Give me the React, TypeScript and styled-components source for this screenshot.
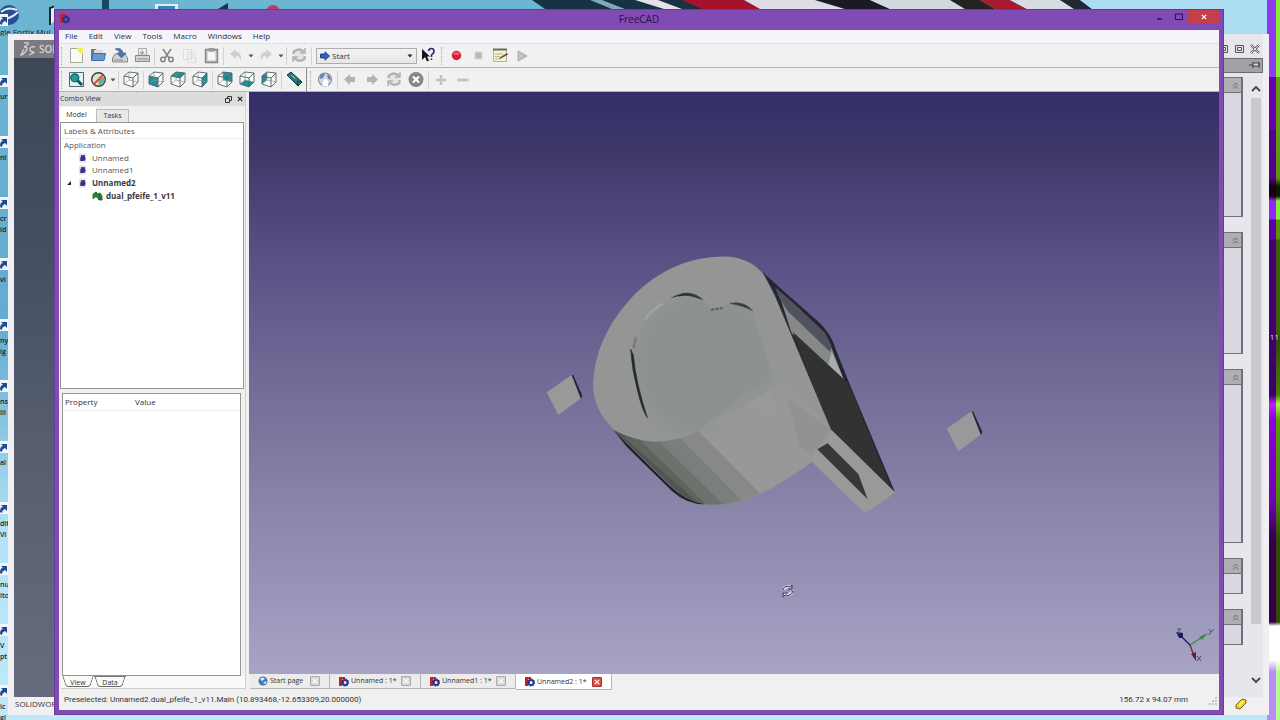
import React from "react";
import styled, { createGlobalStyle, css } from "styled-components";

const GlobalStyle = createGlobalStyle`
  *, *::before, *::after { box-sizing: border-box; }
  body { margin: 0; font-family: "Open Sans", "Noto Sans", sans-serif; font-size: 8px; line-height: 12px; color: #333; }
  button, select { font: inherit; color: inherit; border: 0; background: none; padding: 0; margin: 0; }
  ul { list-style: none; margin: 0; padding: 0; }
  svg { display: block; flex: none; }
`;

/* ---------- desktop ---------- */

const Desktop = styled.div`
  position: relative;
  display: flex;
  min-height: 100vh;
  padding: 9px 56px 5px 54px;
  overflow: hidden;
  background: linear-gradient(#6cb6d2, #63abd0 45%, #b4e3f7 75%, #bfe9fb);
`;

const TopArt = styled.svg`
  position: absolute;
  top: 0;
  left: 0;
  width: 100%;
  height: 40px;
`;

const RightArt = styled.div`
  position: absolute;
  top: 0;
  right: 0;
  bottom: 0;
  width: 13px;
  display: flex;
`;

const PurpleBand = styled.div`
  flex: 1;
  background: linear-gradient(#8f3af0 0 77px, #6a00a8 77px 130px, #540088 130px 178px, #150018 186px 196px, #9326ff 201px 219px, #5c00a0 220px 239px, #420070 240px 330px, #3a0068 395px, #c21cff 404px, #8a00d8 420px, #7400b8 500px, #300048 540px 622px, #fff 626px 660px, #b98cf8 672px);
`;

const GreenBand = styled(PurpleBand)`
  flex: 0 0 4px;
  background: linear-gradient(#88ee38 0 77px, #629c10 77px 130px, #5c9410 178px, #101800 186px 196px, #86ee38 201px 219px, #5a9400 220px 239px, #3e6000 240px 330px, #34480c 340px, #4c7c00 395px, #a0ff48 404px, #5c9c00 420px, #50880c 500px, #344800 540px 622px, #fff 626px 660px, #b4ff90 672px);
`;

const ShortcutColumn = styled.ul`
  position: absolute;
  top: 14px;
  left: 0;
  width: 8px;
  overflow: hidden;
`;

const Shortcut = styled.li`
  display: flex;
  flex-direction: column;
  align-items: flex-start;
  gap: 4px;
  height: 61px;
  color: #082236;
  font-size: 7px;
  font-weight: 600;
  line-height: 11px;
  white-space: pre-line;
`;

const TopShortcuts = styled.div`
  position: absolute;
  top: 0;
  left: 0;
  width: 54px;
  height: 36px;
  overflow: hidden;
  display: flex;
  flex-direction: column;
  justify-content: space-between;
  color: #082236;
  font-size: 8px;
  line-height: 9px;
  white-space: nowrap;
`;

const DesktopLabel = styled.span`
  position: absolute;
  right: 1px;
  top: 331px;
  z-index: 1;
  color: #ddd;
  font-size: 8px;
`;

/* ---------- window behind ---------- */

const BackWindow = styled.div`
  position: absolute;
  inset: 34px 11px 5px 8px;
  display: flex;
  flex-direction: column;
  padding: 6px 6px 0;
  background: #f0f0f3;
`;

const BackBody = styled.div`
  flex: 1;
  display: flex;
  justify-content: space-between;
  background: linear-gradient(#3c4756, #434e62 30%, #555d6e 60%, #666c7d);
`;

const BackBrand = styled.div`
  display: flex;
  align-items: center;
  gap: 3px;
  width: 120px;
  height: 18px;
  padding-left: 6px;
  background: #7d7b7f;
  color: #d2d2d4;
  font-size: 10px;
  font-weight: 600;
`;

const BackSide = styled.div`
  display: flex;
  flex-direction: column;
  width: 80px;
  margin-top: -6px;
  background: #e6e6ec;
`;

const BackControls = styled.div`
  display: flex;
  align-items: flex-end;
  justify-content: flex-end;
  gap: 6px;
  height: 24px;
  padding: 0 3px 4px;
`;

const PinBar = styled.div`
  display: flex;
  justify-content: flex-end;
  height: 15px;
  padding: 1px 1px 0;
  border: 1px solid #6b6b70;
  background: #a2a2a6;
`;

const SideScroll = styled.div`
  flex: 1;
  display: flex;
  padding-top: 4px;
`;

const Cards = styled.div`
  flex: 1;
  display: flex;
  flex-direction: column;
  gap: 15px;
`;

const Card = styled.div<{ $h: number }>`
  height: ${(p) => p.$h}px;
  border: 1px solid #707078;
  border-right-width: 2px;
  background: #d8d8e0;
`;

const CardHead = styled.div`
  display: flex;
  justify-content: flex-end;
  align-items: center;
  height: 15px;
  padding-right: 1px;
  border-bottom: 1px solid #707078;
  background: #aeaeb3;
`;

const ScrollTrack = styled.div`
  display: flex;
  flex-direction: column;
  align-items: center;
  width: 11px;
  margin: 0 2px 0 7px;
  padding: 8px 0 13px;
  gap: 6px;
`;

const ScrollThumb = styled.div`
  flex: 1;
  width: 10px;
  margin-bottom: 47px;
  background: #c9cbcb;
`;

const BackStatus = styled.div`
  display: flex;
  align-items: center;
  justify-content: space-between;
  height: 18px;
  padding: 0 16px 4px 1px;
  color: #333;
`;

/* ---------- main window ---------- */

const Window = styled.main`
  position: relative;
  flex: 1;
  min-width: 0;
  display: flex;
  flex-direction: column;
  padding: 0 5px 5px;
  background: #804bb3;
  box-shadow: inset 0 0 0 1px #693a9c;
`;

const TitleBar = styled.header`
  display: grid;
  grid-template-columns: 1fr auto 1fr;
  align-items: center;
  height: 21px;
  padding-bottom: 2px;
  color: #2b1244;
  font-size: 10px;
`;

const WindowButtons = styled.div`
  display: flex;
  justify-content: flex-end;
  align-self: start;
  padding-top: 1px;
`;

const WindowButton = styled.button<{ $close?: boolean }>`
  display: flex;
  align-items: center;
  justify-content: center;
  width: ${(p) => (p.$close ? 31 : 19)}px;
  height: 13px;
  background: ${(p) => (p.$close ? "#c53e4c" : "none")};
`;

const MenuBar = styled.nav`
  display: flex;
  align-items: flex-start;
  gap: 11px;
  height: 14px;
  padding: 0 6px;
  background: #f5f4fb;
  border-bottom: 1px solid #dedee2;
`;

const MenuItem = styled.button`
  color: #2d2d35;
`;

const ToolRow = styled.div`
  display: flex;
  align-items: center;
  height: 24px;
  background: #f1f1f1;
  border-bottom: 1px solid #b2b2b4;
`;

const Grip = styled.span`
  width: 2px;
  height: 18px;
  margin: 0 2px;
  border-left: 1px dotted #aaa;
`;

const Separator = styled.span<{ $dark?: boolean }>`
  width: 1px;
  height: ${(p) => (p.$dark ? 24 : 18)}px;
  margin: 0 1px;
  background: ${(p) => (p.$dark ? "#8c8c8c" : "#d2d2d2")};
`;

const ToolButton = styled.button<{ $narrow?: boolean }>`
  display: flex;
  align-items: center;
  justify-content: center;
  width: ${(p) => (p.$narrow ? 8 : 22)}px;
  height: 22px;
`;

const Workbench = styled.label`
  display: flex;
  align-items: center;
  width: 101px;
  height: 16px;
  margin-left: 3px;
  padding: 0 3px;
  border: 1px solid #adadad;
  background: linear-gradient(#f3f3f3, #e6e6e6);
`;

const WorkbenchSelect = styled.select`
  flex: 1;
  appearance: none;
  padding-left: 2px;
  outline: 0;
`;

const Workspace = styled.div`
  flex: 1;
  display: flex;
  min-height: 0;
  background: #f0f0f0;
`;

const Dock = styled.aside`
  display: flex;
  flex-direction: column;
  width: 187px;
  margin-right: 3px;
  border-right: 1px solid #d2d2d2;
`;

const DockTitle = styled.div`
  display: flex;
  align-items: center;
  height: 14px;
  padding: 0 0 0 1px;
  background: #dcdcdc;
  font-size: 7px;
`;

const DockName = styled.span`
  flex: 1;
`;

const DockButton = styled.button`
  display: flex;
  justify-content: center;
  width: 11px;
`;

const TabRow = styled.div`
  display: flex;
  align-items: flex-end;
  height: 16px;
  padding-left: 1px;
  font-size: 7px;
`;

const DockTab = styled.button<{ $active?: boolean }>`
  width: ${(p) => (p.$active ? 36 : 33)}px;
  height: ${(p) => (p.$active ? 15 : 13)}px;
  padding-right: ${(p) => (p.$active ? 3 : 0)}px;
  background: ${(p) => (p.$active ? "#fff" : "#e8e8e8")};
  border: ${(p) => (p.$active ? "0" : "1px solid #bcbcbc")};
  border-bottom: 0;
`;

const panelBorder = css`
  border: 1px solid #959595;
  background: #fff;
`;

const Tree = styled.section`
  ${panelBorder}
  flex: 0 1 267px;
  margin: 0 1px 4px 1px;
`;

const TreeHead = styled.div`
  height: 16px;
  padding: 2px 3px 0;
  border-bottom: 1px solid #ececec;
  color: #555;
`;

const TreeRows = styled.ul`
  display: grid;
  grid-template-rows: repeat(5, 1fr);
  height: 63px;
  color: #555;
`;

const TreeRow = styled.li<{ $indent: number; $bold?: boolean }>`
  display: flex;
  align-items: center;
  padding-left: ${(p) => p.$indent}px;
  font-weight: ${(p) => (p.$bold ? 700 : 400)};
  color: ${(p) => (p.$bold ? "#3c3744" : "inherit")};
`;

const TreeIcon = styled.span`
  width: 14px;
`;

const Properties = styled.section`
  ${panelBorder}
  flex: 1;
  margin: 0 4px 0 3px;
`;

const PropertyTable = styled.table`
  width: 100%;
  border-collapse: collapse;
  th {
    height: 16px;
    padding: 1px 2px 0;
    border-bottom: 1px solid #eee;
    font-weight: 400;
    text-align: left;
  }
  th:first-child { width: 70px; }
`;

const BottomTabs = styled.div`
  display: flex;
  height: 13px;
  margin: 0 0 1px 2px;
  padding-left: 1px;
  background: #fafafa;
  border-bottom: 1px solid #ccc;
`;

const BottomTab = styled.button<{ $active?: boolean }>`
  position: relative;
  width: 32px;
  height: 12px;
  font-size: 7px;
  line-height: 11px;
  border-top: 1px solid ${(p) => (p.$active ? "#fafafa" : "#777")};
  &::before, &::after {
    content: "";
    position: absolute;
    top: -1px;
    bottom: 1px;
    width: 50%;
    border-bottom: 1px solid #666;
  }
  &::before {
    left: 2px;
    border-left: 1px solid #666;
    border-radius: 0 0 0 3px;
    transform: skewX(18deg);
  }
  &::after {
    right: 2px;
    border-right: 1px solid #666;
    border-radius: 0 0 3px 0;
    transform: skewX(-18deg);
  }
`;

const Main = styled.div`
  flex: 1;
  min-width: 0;
  display: flex;
  flex-direction: column;
`;

const Viewport = styled.div`
  position: relative;
  flex: 1;
  min-height: 0;
  background: linear-gradient(#332e6a, #3e3868 10%, #564d82 26%, #6c6693 45%, #8883a8 70%, #a7a4c6);
`;

const Scene = styled.svg`
  position: absolute;
  inset: 0;
  width: 100%;
  height: 100%;
`;

const AxisCross = styled.svg`
  position: absolute;
  right: 4px;
  bottom: 10px;
`;

const DocTabs = styled.div`
  display: flex;
  height: 16px;
  padding-left: 1px;
`;

const DocTab = styled.div<{ $active?: boolean; $w: number }>`
  display: flex;
  align-items: center;
  justify-content: space-between;
  width: ${(p) => p.$w}px;
  height: ${(p) => (p.$active ? 16 : 15)}px;
  padding: 0 9px 0 8px;
  background: ${(p) => (p.$active ? "#fff" : "#ececec")};
  border: solid #b5b5b5;
  border-width: 0 1px 1px 0;
`;

const DocName = styled.button`
  display: flex;
  align-items: center;
  gap: 2px;
  font-size: 7px;
`;

const CloseTab = styled.button<{ $active?: boolean }>`
  display: flex;
  align-items: center;
  justify-content: center;
  width: 10px;
  height: 10px;
  border: 1px solid ${(p) => (p.$active ? "#a82c28" : "#a8a8a8")};
  border-radius: 1px;
  background: ${(p) => (p.$active ? "#df5048" : "#d8d8d8")};
`;

const StatusBar = styled.footer`
  display: flex;
  align-items: center;
  justify-content: space-between;
  height: 20px;
  padding: 0 2px 0 5px;
  background: #f0f0f0;
  font-family: Roboto, "Open Sans", sans-serif;
`;

const StatusSize = styled.span`
  margin-left: auto;
  margin-right: 20px;
`;

/* ---------- icons ---------- */

type Face = "none" | "front" | "top" | "right" | "rear" | "bottom" | "left";

const facePoints: Record<Face, string> = {
  none: "",
  front: "1,5 10,7 10,16 1,13",
  top: "1,5 6,1 15,2 10,7",
  right: "10,7 15,2 15,11 10,16",
  rear: "6,1 15,2 15,11 6,9",
  bottom: "1,13 6,9 15,11 10,16",
  left: "1,5 6,1 6,9 1,13",
};

const Cube = ({ face }: { face: Face }) => (
  <svg width="17" height="17" viewBox="0 0 17 17" fill="none">
    <path d="M1 5 6 1 15 2 10 7ZM10 7 15 2V11L10 16ZM1 5 10 7V16L1 13Z" fill="#fafafa" />
    {face !== "none" && <polygon points={facePoints[face]} fill="#1f9297" />}
    <path d="M6 1V9L1 13M6 9 15 11" stroke="#8a9899" strokeWidth=".7" />
    <path d="M1 5 6 1 15 2 10 7ZM10 7 15 2V11L10 16ZM1 5V13L10 16" stroke="#4e6265" strokeWidth=".9" strokeLinejoin="round" />
  </svg>
);

const Logo = ({ size = 11 }: { size?: number }) => (
  <svg width={size} height={size} viewBox="0 0 11 11">
    <path d="M1 1H7V3H4V5H6V7H4V10H1Z" fill="#c8202c" />
    <circle cx="7" cy="6.5" r="2.6" fill="none" stroke="#26348c" strokeWidth="2" />
    <circle cx="7" cy="6.5" r="3.7" fill="none" stroke="#26348c" strokeWidth="1" strokeDasharray="1.4 1.5" />
  </svg>
);

const Caret = ({ color = "#555" }: { color?: string }) => (
  <svg width="6" height="4" viewBox="0 0 6 4"><path d="M0.5 .5H5.5L3 3.5Z" fill={color} /></svg>
);

const icons: Record<string, React.ReactNode> = {
  new: <><path d="M2.500 1.500H14.500V15.500H2.500Z" fill="#fbfbf4" stroke="#a6a69e" /><path d="M9 1H15V7Q10 6 9 1Z" fill="#eded5a" /></>,
  open: <><path d="M1 14V3Q1 2 2 2H6L7 4H13V7H4Z" fill="#717780" /><path d="M4 3H13V7H4Z" fill="#d8dade" /><path d="M3 6.500H15.500L14 13.500H1.500Z" fill="#6c98d0" stroke="#3e6ba8" /></>,
  save: <><path d="M3 7H13L15.500 11V15H.5V11Z" fill="#cfd1d2" stroke="#85888a" /><path d="M2 13H11" stroke="#85888a" /><path d="M3 2Q10 0 11 6H14L9.500 11 5 6H8Q7 3 3 2Z" fill="#4876b0" stroke="#2f588e" strokeWidth=".6" /></>,
  print: <><path d="M4.500 1.500H12.500V8H4.500Z" fill="#eee" stroke="#a8a8a8" /><path d="M8 3V7M6 5 8 7 10 5" stroke="#888" fill="none" /><path d="M1.500 8.500H15.500V14.500H1.500Z" fill="#d4d4d4" stroke="#888" /><path d="M3 12H14" stroke="#8a8a8a" /></>,
  cut: <g fill="none" stroke="#808080"><path d="M4 2 10 11M12 2 6 11" strokeWidth="1.500" /><circle cx="4" cy="12.500" r="2.200" strokeWidth="1.500" /><circle cx="12" cy="12.500" r="2.200" strokeWidth="1.500" /></g>,
  copy: <g fill="#f2f2f2" stroke="#dcdcdc"><path d="M2.500 2.500H10.500V12.500H2.500ZM6.500 5.500H14.500V15.500H6.500Z" /><path d="M8 8H13M8 10H13M8 12H11" /></g>,
  paste: <><path d="M2.500 2.500H14.500V15.500H2.500Z" fill="#bdbdbd" stroke="#888" strokeWidth="1.400" /><path d="M4.500 4.500H12.500V13.500H4.500Z" fill="#f6f6f6" /><path d="M5.500 1H11.500V4.500H5.500Z" fill="#999" /></>,
  undo: <path d="M2 7 8 2V5Q14 5 13 14 12 9 8 9V12Z" fill="#cfcfcf" />,
  redo: <path d="M14 7 8 2V5Q1 5 3 14 4 9 8 9V12Z" fill="#cfcfcf" />,
  refresh: <><path d="M2.500 2.500H13.500V14.500H2.500Z" fill="#e4e4e4" /><g fill="none" stroke="#b0b0b0" strokeWidth="2.200"><path d="M2.500 7V5Q8 0 13 5M13.500 9V12Q8 16 3 11" /><path d="M14 1V6H9M2 15V10H7" strokeWidth="1.500" /></g></>,
  help: <><path d="M2 2V13L5 10 7 14.500 9 13.500 7 9.500H10Z" fill="#151515" /><path d="M8.500 4Q9 1.500 11.500 1.500T14 4.500Q14 6 11.500 8V10M11.500 11.500V13" fill="none" stroke="#24246c" strokeWidth="1.600" /></>,
  record: <><circle cx="8.500" cy="8.500" r="4.700" fill="#da1f35" /><ellipse cx="8.500" cy="6.500" rx="3" ry="1.600" fill="#ee6070" /></>,
  stop: <path d="M5 5H12V12H5Z" fill="#b9b9b9" stroke="#d8d8d8" />,
  edit: <><path d="M1.500 2.500H14.500V14.500H1.500Z" fill="#f3f1d8" stroke="#b4b296" /><path d="M1 1.500H15V3.500H1Z" fill="#6f6c56" /><path d="M3 7H11M3 9.500H8M3 12H7" stroke="#bcb890" /><path d="M7 11 15 6 16 7.500 8 12Z" fill="#6b4a2a" /></>,
  play: <path d="M4 4 13 9 4 14Z" fill="#c2c2c2" stroke="#acacac" />,
  fit: <><path d="M1.500 1.500H15.500V15.500H1.500Z" fill="#e5f1f2" stroke="#3c7074" /><path d="M9 9 14 14" stroke="#17585f" strokeWidth="3" /><circle cx="6.800" cy="6.800" r="4" fill="#24989c" stroke="#176268" strokeWidth="1.200" /></>,
  nodraw: <><circle cx="8.500" cy="8.500" r="6.800" fill="#cdebd0" /><path d="M8 9 14 6V11L9 15Z" fill="#58b5a0" /><circle cx="8.500" cy="8.500" r="6.800" fill="none" stroke="#4b3b36" strokeWidth="1.400" /><path d="M13 4 4 13" stroke="#e04c36" strokeWidth="2" /></>,
  measure: <><path d="M1 4 5 1 16 11 12 15Z" fill="#23777a" stroke="#163c40" /><path d="M5 4.500Q8 5 9 8" fill="none" stroke="#79bcba" strokeWidth="1.200" /><path d="M12 14 11 11 15 10" fill="none" stroke="#163c40" /></>,
  globe: <><circle cx="8" cy="8.500" r="6.500" fill="#cbd8ec" stroke="#8490ab" strokeWidth="1.200" /><path d="M3 4Q6 1 8 3L6 7 3 8ZM10 3 13 5 14 9 11 8ZM5 10 8 9 9 14 6 13Z" fill="#7187b3" /><path d="M5.500 15V10L8 7.500 11 10V15Z" fill="#fff" /></>,
  back: <path d="M2 8.500 8 3V6H13V11H8V14Z" fill="#b2b2b2" />,
  forward: <path d="M14 8.500 8 3V6H3V11H8V14Z" fill="#b2b2b2" />,
  cancel: <><circle cx="8" cy="8.500" r="7.500" fill="#868686" /><path d="M5 5.500 11 11.500M11 5.500 5 11.500" stroke="#fff" strokeWidth="2.200" /></>,
  plus: <path d="M8 4V14M3 9H13" stroke="#c2c2c2" strokeWidth="2.500" />,
  minus: <path d="M2.500 9H13.500" stroke="#c2c2c2" strokeWidth="2.800" />,
};

const Tool = ({ name, label }: { name: string; label: string }) => (
  <ToolButton aria-label={label}>
    <svg width="17" height="17" viewBox="0 0 17 17">{icons[name]}</svg>
  </ToolButton>
);

const Drop = ({ label }: { label: string }) => (
  <ToolButton $narrow aria-label={label}><Caret /></ToolButton>
);

const View = ({ face, label }: { face: Face; label: string }) => (
  <ToolButton aria-label={label}><Cube face={face} /></ToolButton>
);

const DocIcon = () => (
  <svg width="9" height="10" viewBox="0 0 9 10">
    <path d="M1 .5H8V9.500H1Z" fill="#e2e2f4" /><path d="M3 2H7V4H5V8H2Z" fill="#80406c" /><circle cx="5" cy="5.500" r="2.500" fill="#33338e" />
  </svg>
);

const MeshIcon = () => (
  <svg width="11" height="10" viewBox="0 0 11 10">
    <path d="M1 8V3L4 1 6 3 8 2 10 5V9L7 9 5 6 3 6Z" fill="#2f9a3d" stroke="#145f26" strokeWidth=".8" /><path d="M4 1V6M8 2 7 9M6 3 10 9" stroke="#0f4d1d" strokeWidth=".7" />
  </svg>
);

const Chevrons = () => (
  <svg width="9" height="9" viewBox="0 0 9 9" fill="none" stroke="#66666b"><path d="M2 4.500 4.500 2 7 4.500M2 7.500 4.500 5 7 7.500" /></svg>
);

const ShortcutArrow = () => (
  <svg width="8" height="12" viewBox="0 0 8 12"><path d="M0 0H8V12H0Z" fill="#f2f6fa" /><path d="M0 10Q0 5 3 5L1 3H7V9L5 7Q2 8 2 11Z" fill="#1c4a94" /></svg>
);

const XMark = ({ color, size = 6 }: { color: string; size?: number }) => (
  <svg width={size} height={size} viewBox="0 0 6 6"><path d="M.8 .8 5.200 5.200M5.200 .8 .8 5.200" stroke={color} strokeWidth="1.200" /></svg>
);

const SizeGrip = () => (
  <svg width="9" height="9" viewBox="0 0 9 9"><path d="M7 1H9V3H7ZM7 4H9V6H7ZM4 4H6V6H4ZM7 7H9V9H7ZM4 7H6V9H4ZM1 7H3V9H1Z" fill="#c4c4c4" /></svg>
);

/* ---------- 3D scene ---------- */

const Block = ({ x, y }: { x: number; y: number }) => (
  <g transform={`translate(${x} ${y})`}>
    <path d="M0 52 75 0 103 70 35 120Z" fill="#979a98" />
    <path d="M75 0 80 1 107 62 103 72Z" fill="#252434" />
  </g>
);

const Whistle = () => (
  <Scene viewBox="249 92 970 582" aria-label="dual_pfeife_1_v11">
    <defs>
      <linearGradient id="skirt" gradientUnits="userSpaceOnUse" x1="590" y1="700" x2="760" y2="600">
        <stop offset="0" stopColor="#8b8e8c" /><stop offset=".5" stopColor="#959796" /><stop offset="1" stopColor="#989a99" />
      </linearGradient>
      <linearGradient id="skirtFade" gradientUnits="userSpaceOnUse" x1="640" y1="400" x2="690" y2="580">
        <stop offset="0" stopColor="#989a99" stopOpacity="0" /><stop offset="1" stopColor="#979998" />
      </linearGradient>
      <radialGradient id="disc" gradientUnits="userSpaceOnUse" cx="530" cy="370" r="260">
        <stop offset="0" stopColor="#8b8f8e" /><stop offset=".75" stopColor="#8d9190" /><stop offset="1" stopColor="#8f9291" stopOpacity="0" />
      </radialGradient>
    </defs>
    <g transform="translate(530 240) scale(.33333)">
      <path d="M700 98 780 170 870 250Q905 285 918 330L958 430 1095 757 900 575 735 165Z" fill="#252532" />
      <path d="M750 172 905 325 945 428 785 280Z" fill="#868988" />
      <path d="M905 335 945 428 893 378Z" fill="#a9acac" />
      <path d="M735 142 790 188 885 278 905 318 900 335 775 215 748 175Z" fill="#50525c" />
      <path d="M788 275 955 430 1088 752 902 572Z" fill="#313232" />
      <path d="M250 570 370 598 520 565 690 420 760 430 905 570 1095 757 1065 780 1005 820 845 665C800 700 730 745 690 762 640 788 600 797 545 795 490 790 450 765 420 735Z" fill="url(#skirt)" />
      <path d="M250 570 330 598 530 792Q470 785 425 740Z" fill="#525651" />
      <path d="M280 590 345 602 532 793 505 788Z" fill="#5f645f" />
      <path d="M330 600 395 600 582 793 530 794Z" fill="#6d726e" />
      <path d="M382 600 450 588 637 782 580 793Z" fill="#7b7f7c" />
      <path d="M445 588 505 572 690 760 635 782Z" fill="#868987" />
      <path d="M250 570Q330 650 420 738 470 785 525 793 470 793 425 752L290 620Z" fill="#202226" />
      <path d="M600 50C645 55 680 75 702 105 722 135 735 165 750 200L905 570 845 640 800 620 720 450 520 568C470 590 430 605 370 605 320 600 285 590 250 568 200 520 185 460 190 420 195 340 230 260 290 190 370 95 480 45 600 50Z" fill="#939694" />
      <path d="M345 240C375 195 430 158 470 160 500 162 530 180 545 210 570 195 640 175 665 212L740 440 510 572Q430 605 350 590L350 530Q320 450 305 330 325 270 345 240Z" fill="url(#disc)" />
      <path d="M505 572 720 400 790 440 905 570 845 665 720 745 690 760Z" fill="url(#skirtFade)" />
      <path d="M770 470 905 570 845 645 810 622Z" fill="#919392" />
      <path d="M345 238Q370 205 400 190" stroke="#a0a3a1" strokeWidth="8" fill="none" />
      <path d="M420 175Q450 157 475 158 504 162 520 181 490 167 465 167 440 167 420 175Z" fill="#353633" />
      <path d="M543 209 580 204" stroke="#5b5e59" strokeWidth="6" strokeDasharray="9 4" />
      <path d="M600 190Q642 182 668 212 640 197 600 190Z" fill="#353733" stroke="#454843" strokeWidth="2" />
      <path d="M317 290 311 325" stroke="#7b7e78" strokeWidth="8" />
      <path d="M302 328 310 345Q318 430 352 533 338 515 322 450 306 390 302 328Z" fill="#282b28" stroke="#282b28" strokeWidth="2" />
      <path d="M862 628 893 610 985 702 1013 778Z" fill="#373836" />
      <path d="M700 98 735 165 905 570" fill="none" stroke="#34343c" strokeWidth="3" />
      <Block x={50} y={405} />
      <Block x={1250} y={514} />
    </g>
    <g fill="none" stroke="#dcdce8" strokeWidth="3"><path d="M784 590Q784 586 791 587M792 592Q790 596 784 594" /></g>
    <g fill="none" stroke="#3c3a60" strokeWidth="1"><path d="M783 590Q784 585 790 587L792 585V589H788M793 591Q791 597 785 595L783 597V593H788" /></g>
  </Scene>
);

const Axes = () => (
  <AxisCross width="40" height="38" viewBox="0 0 40 38">
    <path d="M15 19 29 10" stroke="#3c8a4a" strokeWidth="1.400" /><path d="M24 11 33 7 27 14Z" fill="#3c8a4a" />
    <path d="M15 19 5 9" stroke="#262660" strokeWidth="1.500" /><path d="M1 6 8 7 8 12 4 12Z" fill="#1c1c5c" />
    <path d="M15 19 19 30" stroke="#7c2848" strokeWidth="1.500" /><path d="M16 28 21 26 21 35Z" fill="#6c1c40" />
    <path d="M2 3H6L2 7H6M34 3 36 6 39 3M36 6 34 9M22 30 26 35M26 30 22 35" fill="none" stroke="#4d4970" />
  </AxisCross>
);

/* ---------- page ---------- */

const shortcutLabels = ["", "ur", "nl", "cr\nid", "vi", "ny\nig", "ns\nlli", "al", "dit\nVi", "nu\nito", "V\npt", "ic\ngi"];
const cardHeights = [140, 122, 174, 36, 36];

export default function App() {
  return (
    <Desktop>
      <GlobalStyle />
      <TopArt viewBox="0 0 1280 40" preserveAspectRatio="none">
        <path d="M102 0H109V40H102Z" fill="#16485e" />
        <path d="M155 4H178V12H155Z" fill="#e2edf4" /><path d="M158 6H175V10H158Z" fill="#3c83bd" />
        <path d="M218 9 228 3V9Z" fill="#173449" /><circle cx="273" cy="12" r="7" fill="#bd3d68" />
        <path d="M532 0H760L790 9H545Z" fill="#163245" />
        <path d="M590 0H602L625 9H612Z" fill="#7da9bd" /><path d="M635 0H658L682 9H664Z" fill="#e4e1e9" />
        <path d="M682 0H744L760 9H702Z" fill="#a5122e" /><path d="M744 0H815L845 9H760Z" fill="#dedde5" />
        <path d="M815 0H870L890 9H845Z" fill="#191a25" /><path d="M870 0H950L965 9H890Z" fill="#d5d7df" />
        <path d="M950 0H980L995 9H965Z" fill="#222" /><path d="M980 0H1010L1027 9H995Z" fill="#a61b32" />
        <path d="M1010 0H1060L1074 9H1027Z" fill="#d8dbe2" /><path d="M1060 0H1080L1092 9H1074Z" fill="#202833" />
        <path d="M1080 0H1280V40H1224V9H1092Z" fill="#acdcf2" />
      </TopArt>
      <RightArt><PurpleBand /><GreenBand /></RightArt>
      <DesktopLabel>11</DesktopLabel>
      <TopShortcuts>
        <svg width="70" height="25" viewBox="0 0 70 25">
          <circle cx="9" cy="15" r="10" fill="#284f93" /><path d="M1 12Q8 6 17 10M4 19Q12 18 18 12" stroke="#dfe9f5" strokeWidth="2" fill="none" />
          <path d="M50 25V8L61 4 70 8" fill="#e8edf2" stroke="#152a3b" strokeWidth="2" />
        </svg>
        <span>gle Fortix Mul</span>
      </TopShortcuts>
      <ShortcutColumn>
        {shortcutLabels.map((label, i) => (
          <Shortcut key={i}><ShortcutArrow />{label}</Shortcut>
        ))}
      </ShortcutColumn>

      <BackWindow>
        <BackBody>
          <BackBrand>
            <svg width="16" height="15" viewBox="0 0 16 15" fill="none" stroke="#d2d2d4" strokeWidth="1.300">
              <path d="M4 1Q9 0 8 2T4 5Q9 5 6 9T1 13L4 7M15 5Q10 4 10 7T13 10 9 13" />
            </svg>
            SOLIDWORKS
          </BackBrand>
          <BackSide>
            <BackControls>
              <svg width="42" height="10" viewBox="0 0 42 10" fill="none" stroke="#55555c">
                <path d="M1.500 1.500H9.500V8.500H1.500ZM3.500 3.500H7.500V6.500H3.500ZM17.500 1.500H25.500V8.500H17.500ZM19.500 3.500H23.500V6.500H19.500Z" />
                <path d="M33 1 41 9M41 1 33 9" stroke="#55555c" strokeWidth="2.400" /><path d="M33 1 41 9M41 1 33 9" stroke="#e6e6ec" />
              </svg>
            </BackControls>
            <PinBar>
              <svg width="12" height="11" viewBox="0 0 12 11"><path d="M0 5H4M4 2V8M4 3H10V6H4M10 2V8" stroke="#3f3f44" fill="#ddd" /></svg>
            </PinBar>
            <SideScroll>
              <Cards>
                {cardHeights.map((h, i) => (
                  <Card key={i} $h={h}><CardHead><Chevrons /></CardHead></Card>
                ))}
              </Cards>
              <ScrollTrack>
                <svg width="10" height="7" viewBox="0 0 10 7"><path d="M1 6 5 2 9 6" fill="none" stroke="#444" strokeWidth="1.800" /></svg>
                <ScrollThumb />
                <svg width="10" height="7" viewBox="0 0 10 7"><path d="M1 1 5 5 9 1" fill="none" stroke="#444" strokeWidth="1.800" /></svg>
              </ScrollTrack>
            </SideScroll>
          </BackSide>
        </BackBody>
        <BackStatus>
          <span>SOLIDWORKS</span>
          <svg width="12" height="12" viewBox="0 0 12 12"><path d="M1 7 7 1 11 2V5L5 11 1 10Z" fill="#f2cd2b" stroke="#80650f" /><path d="M4 8 8 3" stroke="#fff3a8" strokeWidth="1.500" /></svg>
        </BackStatus>
      </BackWindow>

      <Window>
        <TitleBar>
          <Logo />
          <span>FreeCAD</span>
          <WindowButtons>
            <WindowButton aria-label="Minimize"><svg width="7" height="7" viewBox="0 0 7 7"><path d="M1 6H6" stroke="#2b1244" strokeWidth="1.400" /></svg></WindowButton>
            <WindowButton aria-label="Maximize"><svg width="8" height="7" viewBox="0 0 8 7"><path d="M.5 1H7.500V6.500H.5Z" fill="none" stroke="#2b1244" /></svg></WindowButton>
            <WindowButton $close aria-label="Close"><XMark color="#fff" /></WindowButton>
          </WindowButtons>
        </TitleBar>
        <MenuBar>
          {["File", "Edit", "View", "Tools", "Macro", "Windows", "Help"].map((m) => <MenuItem key={m}>{m}</MenuItem>)}
        </MenuBar>
        <ToolRow>
          <Grip />
          <Tool name="new" label="New" /><Tool name="open" label="Open" /><Tool name="save" label="Save" /><Tool name="print" label="Print" />
          <Separator />
          <Tool name="cut" label="Cut" /><Tool name="copy" label="Copy" /><Tool name="paste" label="Paste" />
          <Separator />
          <Tool name="undo" label="Undo" /><Drop label="Undo list" /><Tool name="redo" label="Redo" /><Drop label="Redo list" />
          <Separator />
          <Tool name="refresh" label="Refresh" />
          <Separator />
          <Workbench>
            <svg width="10" height="10" viewBox="0 0 10 10"><path d="M.5 3H5V.8L9.500 5 5 9.200V7H.5Z" fill="#2e5fd0" stroke="#152c74" strokeWidth=".8" /></svg>
            <WorkbenchSelect aria-label="Workbench" defaultValue="Start"><option>Start</option></WorkbenchSelect>
            <Caret color="#222" />
          </Workbench>
          <Tool name="help" label="What's This?" />
          <Grip />
          <Tool name="record" label="Record macro" /><Tool name="stop" label="Stop recording" /><Tool name="edit" label="Macros" /><Tool name="play" label="Execute macro" />
        </ToolRow>
        <ToolRow>
          <Grip />
          <Tool name="fit" label="Fit all" /><Tool name="nodraw" label="Draw style" /><Drop label="Draw styles" />
          <Separator />
          <View face="none" label="Axonometric" />
          <Separator />
          <View face="front" label="Front" /><View face="top" label="Top" /><View face="right" label="Right" />
          <Separator />
          <View face="rear" label="Rear" /><View face="bottom" label="Bottom" /><View face="left" label="Left" />
          <Separator />
          <Tool name="measure" label="Measure distance" />
          <Separator $dark />
          <Grip />
          <Tool name="globe" label="Home page" />
          <Separator />
          <Tool name="back" label="Previous page" /><Tool name="forward" label="Next page" /><Tool name="refresh" label="Refresh page" /><Tool name="cancel" label="Stop loading" />
          <Separator />
          <Tool name="plus" label="Zoom in" /><Tool name="minus" label="Zoom out" />
        </ToolRow>

        <Workspace>
          <Dock>
            <DockTitle>
              <DockName>Combo View</DockName>
              <DockButton aria-label="Float"><svg width="7" height="7" viewBox="0 0 7 7" fill="none" stroke="#333"><path d="M2.500 2V.5H6.500V4.500H5M.5 2.500H4.500V6.500H.5Z" /></svg></DockButton>
              <DockButton aria-label="Close panel"><XMark color="#222" /></DockButton>
            </DockTitle>
            <TabRow><DockTab $active>Model</DockTab><DockTab>Tasks</DockTab></TabRow>
            <Tree>
              <TreeHead>Labels &amp; Attributes</TreeHead>
              <TreeRows>
                <TreeRow $indent={3}>Application</TreeRow>
                <TreeRow $indent={17}><TreeIcon><DocIcon /></TreeIcon>Unnamed</TreeRow>
                <TreeRow $indent={17}><TreeIcon><DocIcon /></TreeIcon>Unnamed1</TreeRow>
                <TreeRow $indent={3} $bold>
                  <TreeIcon><svg width="9" height="6" viewBox="0 0 9 6"><path d="M3 5H7V1Z" fill="#222" /></svg></TreeIcon>
                  <TreeIcon><DocIcon /></TreeIcon>Unnamed2
                </TreeRow>
                <TreeRow $indent={31} $bold><TreeIcon><MeshIcon /></TreeIcon>dual_pfeife_1_v11</TreeRow>
              </TreeRows>
            </Tree>
            <Properties>
              <PropertyTable><thead><tr><th scope="col">Property</th><th scope="col">Value</th></tr></thead></PropertyTable>
            </Properties>
            <BottomTabs><BottomTab $active>View</BottomTab><BottomTab>Data</BottomTab></BottomTabs>
          </Dock>
          <Main>
            <Viewport><Whistle /><Axes /></Viewport>
            <DocTabs>
              <DocTab $w={80}>
                <DocName>
                  <svg width="10" height="10" viewBox="0 0 10 10"><circle cx="5" cy="5" r="4.500" fill="#3f7cba" /><path d="M2 3Q5 0 7 3L4 5ZM5 7 8 5 8 8Z" fill="#dcebf5" /></svg>
                  Start page
                </DocName>
                <CloseTab aria-label="Close Start page"><XMark color="#fff" /></CloseTab>
              </DocTab>
              <DocTab $w={91}><DocName><Logo />Unnamed : 1*</DocName><CloseTab aria-label="Close Unnamed"><XMark color="#fff" /></CloseTab></DocTab>
              <DocTab $w={95}><DocName><Logo />Unnamed1 : 1*</DocName><CloseTab aria-label="Close Unnamed1"><XMark color="#fff" /></CloseTab></DocTab>
              <DocTab $w={96} $active><DocName><Logo />Unnamed2 : 1*</DocName><CloseTab $active aria-label="Close Unnamed2"><XMark color="#fff" /></CloseTab></DocTab>
            </DocTabs>
          </Main>
        </Workspace>
        <StatusBar>
          <span>Preselected: Unnamed2.dual_pfeife_1_v11.Main (10.893468,-12.653309,20.000000)</span>
          <StatusSize>156.72 x 94.07 mm</StatusSize>
          <SizeGrip />
        </StatusBar>
      </Window>
    </Desktop>
  );
}
